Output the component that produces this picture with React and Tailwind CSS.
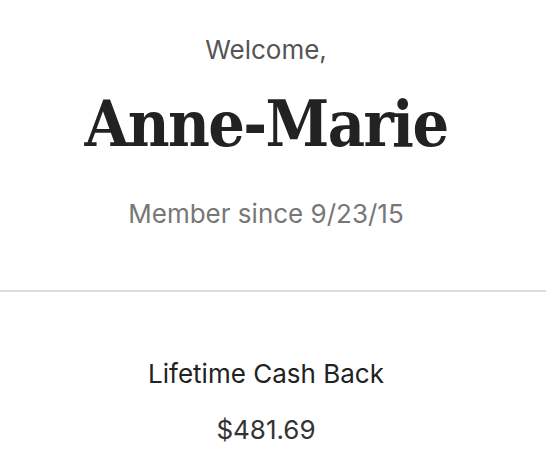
export default function App() {
  return (
    <div className="min-h-screen bg-white font-['Inter',sans-serif]">
      {/* Greeting */}
      <div className="flex flex-col items-center pr-[14px] pt-[30px] pb-[56px]">
        <p className="text-[26px] leading-[40px] text-[#555555]">Welcome,</p>
        <h1 className="mt-[14px] font-['DejaVu_Serif_Condensed','DejaVu_Serif',serif] [font-stretch:condensed] font-bold text-[64px] leading-[80px] tracking-[-1.6px] text-[#222222]">
          Anne-Marie
        </h1>
        <p className="mt-[30px] text-[26px] leading-[40px] text-[#777777]">Member since 9/23/15</p>
      </div>

      <div className="h-[2px] bg-[#dcdcdc]" />

      {/* Cash back */}
      <div className="flex flex-col items-center pr-[14px] pt-[62px]">
        <p className="text-[26px] leading-[40px] text-[#222222]">Lifetime Cash Back</p>
        <p className="mt-[16px] text-[26px] leading-[40px] text-[#333333]">$481.69</p>
      </div>
    </div>
  )
}
